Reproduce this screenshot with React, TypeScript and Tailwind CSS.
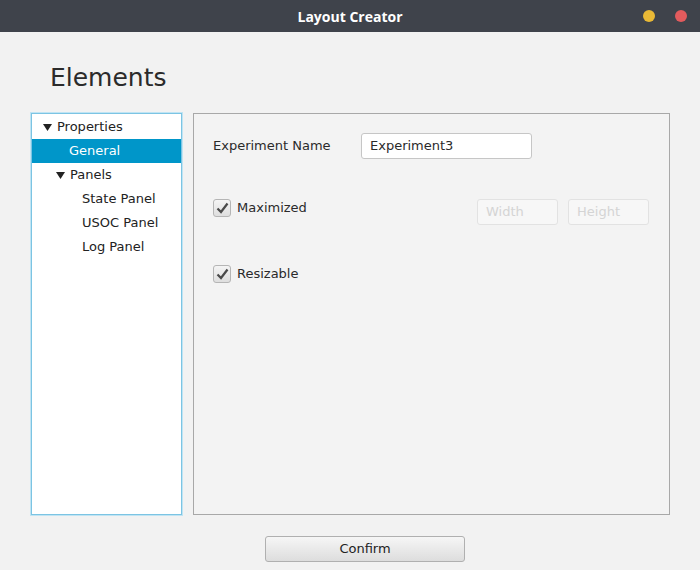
import React from "react";

const Tri = () => (
  <svg width="9" height="7" viewBox="0 0 9 7" className="shrink-0">
    <path d="M0 0 H9 L4.5 7 Z" fill="#222" />
  </svg>
);

const Check = () => (
  <div className="w-[18px] h-[18px] rounded-[3px] border border-[#b5b5b5] bg-gradient-to-b from-[#f4f4f4] to-[#dedede] flex items-center justify-center">
    <svg width="13" height="12" viewBox="0 0 13 12">
      <path d="M1.5 6.5 L5 10 L11.5 1.5" fill="none" stroke="#4a4a4a" strokeWidth="2.2" />
    </svg>
  </div>
);

export default function App() {
  return (
    <div className="w-[700px] h-[570px] bg-[#f2f2f2] flex flex-col overflow-hidden" style={{ fontFamily: '"DejaVu Sans", sans-serif' }}>
      <div className="h-[32px] bg-[#3f434b] relative flex items-center justify-center shrink-0">
        <span className="text-white font-bold text-[14px]" style={{ fontFamily: '"Open Sans", "Noto Sans", sans-serif' }}>Layout Creator</span>
        <div className="absolute left-[643px] top-[10px] w-[12px] h-[12px] rounded-full bg-[#e9b936]" />
        <div className="absolute left-[675px] top-[10px] w-[12px] h-[12px] rounded-full bg-[#e25b5d]" />
      </div>
      <div className="pl-[50px] pt-[30px] h-[81px] text-[25px] text-[#2b2b2b] leading-[32px] shrink-0">Elements</div>
      <div className="flex pl-[31px] gap-[11px] h-[402px]">
        <div className="w-[151px] h-[402px] bg-white border border-[#7cc4e3] shadow-[0_0_0_1px_#c0e4f3] text-[13px] text-[#222] pt-[1px]">
          <div className="h-[24px] flex items-center pl-[11px] gap-[5px]"><Tri /><span>Properties</span></div>
          <div className="h-[24px] flex items-center pl-[37px] bg-[#0096c9] text-white">General</div>
          <div className="h-[24px] flex items-center pl-[24px] gap-[5px]"><Tri /><span>Panels</span></div>
          <div className="h-[24px] flex items-center pl-[50px]">State Panel</div>
          <div className="h-[24px] flex items-center pl-[50px]">USOC Panel</div>
          <div className="h-[24px] flex items-center pl-[50px]">Log Panel</div>
        </div>
        <div className="w-[477px] h-[402px] border border-[#a8a8a8] bg-[#f3f3f3] text-[13px] text-[#2a2a2a] flex flex-col pl-[19px] pt-[19px]">
          <div className="flex items-center h-[26px]">
            <span className="w-[148px]">Experiment Name</span>
            <div className="w-[171px] h-[26px] bg-white border border-[#c6c6c6] rounded-[3px] flex items-center pl-[8px]">Experiment3</div>
          </div>
          <div className="flex items-start h-[26px] mt-[40px]">
            <Check />
            <span className="ml-[6px] w-[240px] leading-[18px]">Maximized</span>
            <div className="w-[81px] h-[26px] bg-[#f7f7f7] border border-[#e2e2e2] rounded-[3px] flex items-center pl-[8px] text-[#d4d4d4]">Width</div>
            <div className="ml-[10px] w-[81px] h-[26px] bg-[#f7f7f7] border border-[#e2e2e2] rounded-[3px] flex items-center pl-[8px] text-[#d4d4d4]">Height</div>
          </div>
          <div className="flex items-start h-[26px] mt-[40px]">
            <Check />
            <span className="ml-[6px] leading-[18px]">Resizable</span>
          </div>
        </div>
      </div>
      <div className="flex pl-[265px] pt-[21px]">
        <div className="w-[200px] h-[26px] rounded-[3px] border border-[#b0b0b0] bg-gradient-to-b from-[#f6f6f6] to-[#dddddd] flex items-center justify-center text-[13px] text-[#222]">Confirm</div>
      </div>
    </div>
  );
}
